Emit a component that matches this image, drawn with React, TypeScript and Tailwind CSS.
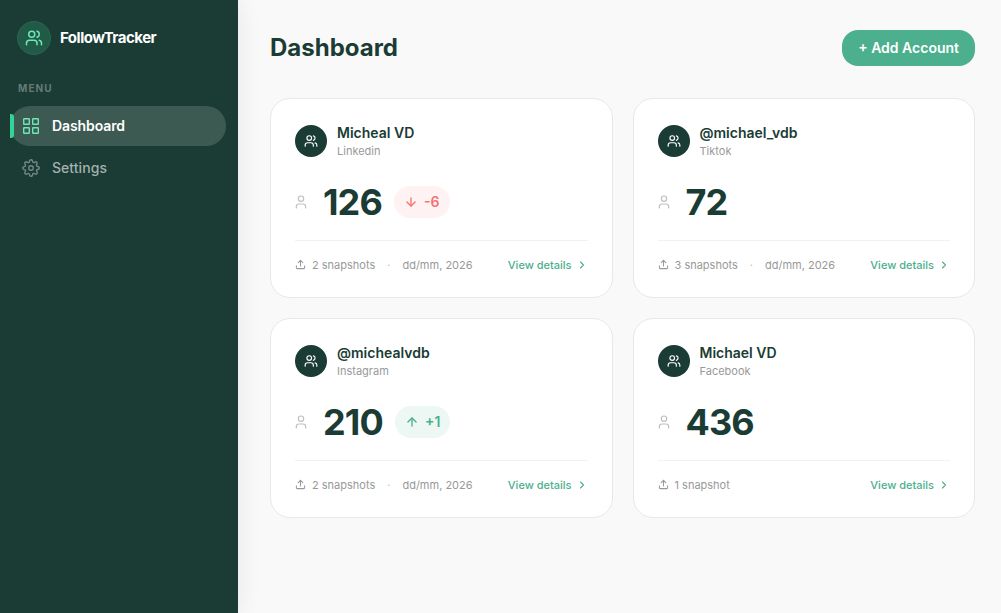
import React from 'react';
import { ArrowDown, ArrowUp, ChevronRight, Upload, User, Users } from 'lucide-react';
import { FiSettings } from 'react-icons/fi';

type Account = {
  name: string;
  platform: string;
  followers: number;
  change?: number;
  snapshots: number;
  date?: string;
};

const accounts: Account[] = [
  { name: 'Micheal VD', platform: 'Linkedin', followers: 126, change: -6, snapshots: 2, date: 'dd/mm, 2026' },
  { name: '@michael_vdb', platform: 'Tiktok', followers: 72, snapshots: 3, date: 'dd/mm, 2026' },
  { name: '@michealvdb', platform: 'Instagram', followers: 210, change: 1, snapshots: 2, date: 'dd/mm, 2026' },
  { name: 'Michael VD', platform: 'Facebook', followers: 436, snapshots: 1 }
];

const GridIcon: React.FC = () => (
  <svg width="18" height="18" viewBox="0 0 18 18" fill="none" stroke="currentColor" strokeWidth="1.4" className="text-[#6ee7b7]">
    <rect x="1.7" y="1.7" width="5.6" height="5.6" rx="0.5" />
    <rect x="10.7" y="1.7" width="5.6" height="5.6" rx="0.5" />
    <rect x="1.7" y="10.7" width="5.6" height="5.6" rx="0.5" />
    <rect x="10.7" y="10.7" width="5.6" height="5.6" rx="0.5" />
  </svg>
);

const Sidebar: React.FC = () => (
  <aside className="w-[238px] shrink-0 bg-[#1a3c34] shadow-[4px_0_20px_rgba(0,0,0,0.06)]">
    <div className="flex items-center gap-[9px] pl-[17px] pt-[21px]">
      <div className="flex size-[34px] items-center justify-center rounded-full border border-[#276651] bg-[#215b48] text-[#6ee7b7]">
        <Users size={18} strokeWidth={2} />
      </div>
      <span className="text-[15px] font-bold tracking-[-0.5px] text-white">FollowTracker</span>
    </div>

    <p className="mt-[25px] pl-[18px] text-[10px] leading-4 font-bold tracking-[1.1px] text-[#647b74]">MENU</p>

    <nav className="mt-[10px] flex flex-col gap-[2px] pr-3 pl-[10px]">
      <a className="relative flex h-10 items-center gap-3 rounded-[20px] bg-[#3d5a52] pl-3 text-sm font-semibold tracking-[-0.1px] text-white">
        <span className="absolute top-2 left-0 h-6 w-1 rounded-r-[3px] bg-[#34d399]" />
        <GridIcon />
        Dashboard
      </a>
      <a className="flex h-10 items-center gap-3 rounded-[20px] pl-3 text-sm font-medium tracking-[0.05px] text-[#a4b1ae]">
        <FiSettings size={18} strokeWidth={1.8} className="text-[#778a85]" />
        Settings
      </a>
    </nav>
  </aside>
);

const ChangeBadge: React.FC<{ change: number }> = ({ change }) => {
  const down = change < 0;
  const Arrow = down ? ArrowDown : ArrowUp;
  return (
    <span
      className={`ml-[12.2px] flex h-8 items-center gap-[6px] rounded-full px-[10px] text-sm font-semibold ${
        down ? 'bg-[#fef2f2] text-[#f87171]' : 'bg-[#edf7f3] text-[#4caf8e]'
      }`}
    >
      <Arrow size={14} strokeWidth={2.3} />
      {down ? change : `+${change}`}
    </span>
  );
};

const AccountCard: React.FC<{ account: Account }> = ({ account }) => (
  <article className="h-[200px] rounded-[20px] border border-[#e8e8e8] bg-white px-6 pt-6">
    <div className="flex items-center gap-[10px]">
      <div className="flex size-8 items-center justify-center rounded-full bg-[#1a3c34] text-white">
        <Users size={14} strokeWidth={2} />
      </div>
      <div>
        <h2 className="text-sm leading-5 font-semibold text-[#1a3c34]">{account.name}</h2>
        <p className="text-[11px] leading-4 text-[#999999]">{account.platform}</p>
      </div>
    </div>

    <div className="mt-5 flex h-[46px] items-center">
      <User size={16} strokeWidth={1.8} className="-ml-[2px] text-[#c0c0c0]" />
      <span className="ml-[14px] text-4xl leading-none font-bold tracking-[-0.9px] text-[#1a3c34]">
        {account.followers}
      </span>
      {account.change !== undefined && <ChangeBadge change={account.change} />}
    </div>

    {/* Card footer */}
    <div className="mt-[15px] flex items-center border-t border-[#f2f2f2] pt-4 text-[11px] leading-4 text-[#999999]">
      <Upload size={11} strokeWidth={2.2} className="mb-px" />
      <span className="ml-[6px]">
        {account.snapshots} {account.snapshots === 1 ? 'snapshot' : 'snapshots'}
      </span>
      {account.date && (
        <>
          <span className="w-[27.2px] text-center text-[#c0c0c0]">·</span>
          <span>{account.date}</span>
        </>
      )}
      <a className="ml-auto flex items-center gap-1 font-medium text-[#4caf8e]">
        View details
        <ChevronRight size={12} strokeWidth={2.2} />
      </a>
    </div>
  </article>
);

const App: React.FC = () => (
  <div className="flex h-screen overflow-hidden bg-[#f9f9f9] font-['Inter',sans-serif]">
    <Sidebar />
    <main className="flex-1 pt-[30px] pr-[26px] pl-8">
      <header className="flex h-9 items-center justify-between">
        <h1 className="text-2xl font-bold text-[#1a3c34]">Dashboard</h1>
        <button className="h-9 rounded-[16px] bg-[#4caf8e] px-4 text-sm font-semibold text-white">+ Add Account</button>
      </header>
      <div className="mt-8 grid grid-cols-2 gap-5">
        {accounts.map((account) => (
          <AccountCard key={account.platform} account={account} />
        ))}
      </div>
    </main>
  </div>
);

export default App;
